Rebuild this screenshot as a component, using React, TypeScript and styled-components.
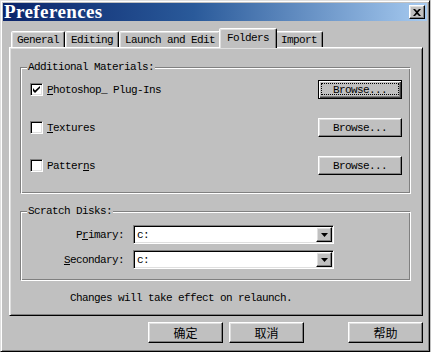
import React from "react";
import styled, { createGlobalStyle, css } from "styled-components";

const Global = createGlobalStyle`
  html, body { margin: 0; padding: 0; background: #c0c0c0; }
  body {
    font-family: "Liberation Mono", "DejaVu Sans Mono", monospace;
    font-size: 11px;
    letter-spacing: -0.6px;
    line-height: 12px;
    color: #000;
  }
  * { box-sizing: border-box; }
`;

const raised = css`
  background: #c0c0c0;
  border: 1px solid;
  border-color: #fff #000 #000 #fff;
  box-shadow: inset -1px -1px #808080, inset 1px 1px #dfdfdf;
`;

const sunken = css`
  border: 1px solid;
  border-color: #808080 #fff #fff #808080;
  box-shadow: inset 1px 1px #000, inset -1px -1px #dfdfdf;
`;

const Window = styled.div`
  width: 430px;
  height: 352px;
  background: #c0c0c0;
  border: 1px solid;
  border-color: #dfdfdf #000 #000 #dfdfdf;
  box-shadow: inset 1px 1px #fff, inset -1px -1px #808080;
  padding: 2px;
  display: flex;
  flex-direction: column;
`;

const TitleBar = styled.div`
  height: 18px;
  flex: none;
  display: flex;
  align-items: center;
  justify-content: space-between;
  padding: 0 2px 0 1px;
  background: linear-gradient(to right, #0a246a 0%, #2a5a9a 45%, #a6caf0 100%);
`;

const Title = styled.span`
  font-family: "Liberation Serif", "DejaVu Serif", serif;
  font-weight: bold;
  font-size: 19px;
  letter-spacing: 0.4px;
  line-height: 18px;
  color: #fff;
`;

const CloseButton = styled.div`
  ${raised};
  width: 16px;
  height: 14px;
  display: flex;
  align-items: center;
  justify-content: center;
`;

const Body = styled.div`
  flex: 1;
  display: flex;
  flex-direction: column;
  padding: 7px 4px 0 6px;
`;

const TabStrip = styled.div`
  display: flex;
  align-items: flex-end;
  height: 19px;
  padding-left: 2px;
`;

const Tab = styled.div<{ $active?: boolean }>`
  position: relative;
  height: ${(p) => (p.$active ? 20 : 16)}px;
  padding: 0 ${(p) => (p.$active ? 7 : 5)}px ${(p) => (p.$active ? 2 : 0)}px;
  margin: 0 ${(p) => (p.$active ? -2 : 0)}px ${(p) => (p.$active ? -1 : 0)}px;
  z-index: ${(p) => (p.$active ? 1 : 0)};
  display: flex;
  align-items: center;
  background: #c0c0c0;
  border: 1px solid;
  border-bottom: none;
  border-color: #fff #000 transparent #fff;
  border-radius: 2px 2px 0 0;
  box-shadow: inset -1px 0 #808080, inset 1px 1px #dfdfdf;
  white-space: nowrap;
`;

const Panel = styled.div`
  height: 269px;
  flex: none;
  border: 1px solid;
  border-color: #fff #000 #000 #fff;
  box-shadow: inset 1px 1px #dfdfdf, inset -1px -1px #808080;
  padding: 19px 11px 0 10px;
  display: flex;
  flex-direction: column;
`;

const GroupBox = styled.div<{ $gapTop?: number }>`
  position: relative;
  margin-top: ${(p) => p.$gapTop ?? 0}px;
  border: 1px solid;
  border-color: #808080 #fff #fff #808080;
  box-shadow: inset 1px 1px #fff, inset -1px -1px #808080;
`;

const Legend = styled.span`
  position: absolute;
  top: -7px;
  left: 6px;
  padding: 0 1px;
  background: #c0c0c0;
  white-space: nowrap;
`;

const MaterialsBody = styled.div`
  display: flex;
  flex-direction: column;
  gap: 19px;
  padding: 12px 8px 18px 9px;
`;

const MaterialRow = styled.div`
  height: 19px;
  display: flex;
  align-items: center;
  justify-content: space-between;
`;

const CheckLabel = styled.label`
  display: flex;
  align-items: center;
  gap: 4px;
`;

const CheckBox = styled.span`
  ${sunken};
  width: 13px;
  height: 13px;
  background: #fff;
  display: flex;
  align-items: center;
  justify-content: center;
`;

const U = styled.span`
  text-decoration: underline;
  text-underline-offset: 1px;
`;

const PushButton = styled.div<{ $default?: boolean; $w: number; $h: number; $cjk?: boolean }>`
  position: relative;
  width: ${(p) => p.$w}px;
  height: ${(p) => p.$h}px;
  display: flex;
  align-items: center;
  justify-content: center;
  background: #c0c0c0;
  border: 1px solid;
  ${(p) =>
    p.$default
      ? css`
          border-color: #000;
          box-shadow: inset 1px 1px #fff, inset -1px -1px #404040, inset -2px -2px #808080;
        `
      : css`
          border-color: #fff #000 #000 #fff;
          box-shadow: inset -1px -1px #808080, inset 1px 1px #dfdfdf;
        `}
  ${(p) =>
    p.$cjk &&
    css`
      font-family: "Noto Sans CJK SC", "Noto Sans", sans-serif;
      font-size: 12px;
      letter-spacing: 0;
    `}
`;

const FocusRing = styled.span`
  position: absolute;
  inset: 2px 2px 3px 2px;
  border: 1px dotted #000;
`;

const DisksBody = styled.div`
  display: grid;
  grid-template-columns: 103px 201px;
  column-gap: 9px;
  row-gap: 6px;
  align-items: center;
  padding: 13px 0 11px 0;
`;

const FieldLabel = styled.span`
  text-align: right;
`;

const Combo = styled.div`
  ${sunken};
  height: 19px;
  background: #fff;
  padding: 1px;
  display: flex;
  align-items: center;
`;

const ComboValue = styled.span`
  flex: 1;
  padding-left: 2px;
`;

const ComboArrow = styled.div`
  ${raised};
  width: 16px;
  height: 15px;
  display: flex;
  align-items: center;
  justify-content: center;
`;

const Note = styled.div`
  margin: 11px 0 0 50px;
`;

const ButtonRow = styled.div`
  display: flex;
  justify-content: flex-end;
  gap: 6px;
  margin-top: 6px;
`;

const Spacer = styled.div`
  width: 32px;
`;

const CloseGlyph = () => (
  <svg width="8" height="7" viewBox="0 0 8 7">
    <path d="M0 0h2l2 2 2-2h2L5 3.5 8 7H6L4 5 2 7H0l3-3.5z" fill="#000" />
  </svg>
);

const CheckGlyph = () => (
  <svg width="7" height="7" viewBox="0 0 7 7">
    <path d="M0 2v3l2 2 5-5V0L2 4.5z" fill="#000" />
  </svg>
);

const ArrowGlyph = () => (
  <svg width="7" height="4" viewBox="0 0 7 4">
    <path d="M0 0h7L3.5 4z" fill="#000" />
  </svg>
);

const materials: { label: React.ReactNode; checked: boolean; isDefault?: boolean }[] = [
  { label: <><U>P</U>hotoshop_ Plug-Ins</>, checked: true, isDefault: true },
  { label: <><U>T</U>extures</>, checked: false },
  { label: <>Patter<U>n</U>s</>, checked: false },
];

const tabs = ["General", "Editing", "Launch and Edit", "Folders", "Import"];

export default function App() {
  return (
    <>
      <Global />
      <Window>
        <TitleBar>
          <Title>Preferences</Title>
          <CloseButton>
            <CloseGlyph />
          </CloseButton>
        </TitleBar>
        <Body>
          <TabStrip>
            {tabs.map((t) => (
              <Tab key={t} $active={t === "Folders"}>
                {t}
              </Tab>
            ))}
          </TabStrip>
          <Panel>
            <GroupBox>
              <Legend>Additional Materials:</Legend>
              <MaterialsBody>
                {materials.map((m, i) => (
                  <MaterialRow key={i}>
                    <CheckLabel>
                      <CheckBox>{m.checked && <CheckGlyph />}</CheckBox>
                      <span>{m.label}</span>
                    </CheckLabel>
                    <PushButton $w={84} $h={19} $default={m.isDefault}>
                      {m.isDefault && <FocusRing />}
                      Browse...
                    </PushButton>
                  </MaterialRow>
                ))}
              </MaterialsBody>
            </GroupBox>
            <GroupBox $gapTop={17}>
              <Legend>Scratch Disks:</Legend>
              <DisksBody>
                <FieldLabel>
                  P<U>r</U>imary:
                </FieldLabel>
                <Combo>
                  <ComboValue>c:</ComboValue>
                  <ComboArrow>
                    <ArrowGlyph />
                  </ComboArrow>
                </Combo>
                <FieldLabel>
                  <U>S</U>econdary:
                </FieldLabel>
                <Combo>
                  <ComboValue>c:</ComboValue>
                  <ComboArrow>
                    <ArrowGlyph />
                  </ComboArrow>
                </Combo>
              </DisksBody>
            </GroupBox>
            <Note>Changes will take effect on relaunch.</Note>
          </Panel>
          <ButtonRow>
            <PushButton $w={75} $h={21} $cjk>确定</PushButton>
            <PushButton $w={75} $h={21} $cjk>取消</PushButton>
            <Spacer />
            <PushButton $w={75} $h={21} $cjk>帮助</PushButton>
          </ButtonRow>
        </Body>
      </Window>
    </>
  );
}
